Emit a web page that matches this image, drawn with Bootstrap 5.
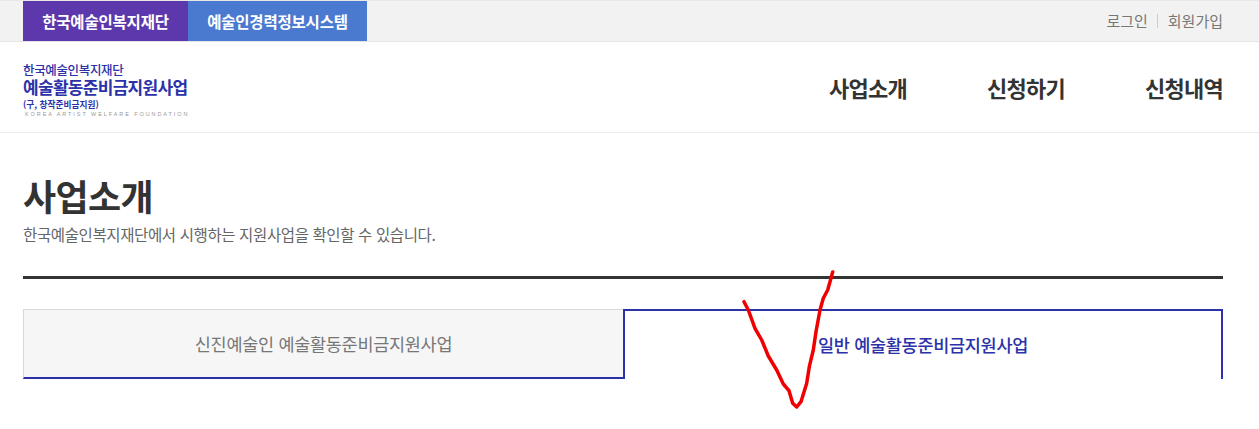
<!DOCTYPE html>
<html lang="ko">
<head>
  <meta charset="UTF-8">
  <title>사업소개</title>
  <link href="https://cdn.jsdelivr.net/npm/bootstrap@5.3.2/dist/css/bootstrap.min.css" rel="stylesheet">
  <style>
    body {
      font-family: "Noto Sans CJK KR", "Liberation Sans", sans-serif;
      color: #333;
      background: #fff;
      overflow: hidden;
      position: relative;
      height: 429px;
    }
    .wrap-x { padding: 0 36px 0 23px; }
    .top-strip {
      height: 42px;
      background: #f2f2f2;
      border-top: 1px solid #e8e8e8;
      border-bottom: 1px solid #e5e5e5;
    }
    .site-tab {
      height: 40px;
      line-height: 40px;
      color: #fff;
      font-size: 15.5px;
      font-weight: 700;
      text-align: center;
      text-decoration: none;
      letter-spacing: -0.2px;
    }
    .tab-foundation { width: 165px; background: #5c38ac; }
    .tab-career { width: 179px; background: #4a7ad0; }
    .util-link { color: #777; font-size: 15px; text-decoration: none; }
    .util-sep { width: 1px; height: 14px; background: #ccc; margin: 0 10px 0 9px; }
    .main-head { height: 91px; border-bottom: 1px solid #ebebeb; }
    .logo-box { color: #2b31a8; line-height: 1; width: 166px; padding-top: 8px; }
    .logo-top { font-size: 12.5px; font-weight: 500; letter-spacing: -0.35px; }
    .logo-main { font-size: 17px; font-weight: 700; letter-spacing: -0.7px; margin-top: 1px; }
    .logo-old { font-size: 8.7px; font-weight: 700; margin-top: 6px; }
    .logo-eng { font-family: "Liberation Sans", sans-serif; font-size: 5.5px; color: #999; letter-spacing: 1.92px; margin: 3px 0 0 2px; white-space: nowrap; }
    .gnb-link { color: #333; font-size: 22px; font-weight: 700; text-decoration: none; letter-spacing: -0.75px; margin-left: 80px; }
    .page-title { font-size: 36px; font-weight: 700; line-height: 1; margin: 44px 0 0; letter-spacing: -0.6px; color: #333; }
    .page-sub { font-size: 15.5px; color: #666; line-height: 20px; margin: 11px 0 0; letter-spacing: -0.38px; }
    .title-rule { height: 3px; background: #333; margin-top: 32px; }
    .biz-tabs { margin-top: 30px; height: 70px; }
    .biz-tab {
      width: 50%;
      font-size: 17.5px;
      text-align: center;
      text-decoration: none;
      letter-spacing: -0.3px;
      display: flex;
      align-items: center;
      justify-content: center;
    }
    .biz-off {
      background: #f6f6f6;
      color: #777;
      border: 1px solid #d9d9d9;
      border-bottom: 2px solid #2b31a8;
      border-right: 0;
      padding-top: 1px;
    }
    .biz-on {
      color: #2b31a8;
      font-weight: 500;
      border: 2px solid #2b31a8;
      border-bottom: 0;
    }
    .red-check { position: absolute; left: 0; top: 0; pointer-events: none; }
  </style>
</head>
<body>
  <div class="top-strip wrap-x d-flex justify-content-between">
    <div class="d-flex">
      <a class="site-tab tab-foundation" href="#">한국예술인복지재단</a>
      <a class="site-tab tab-career" href="#">예술인경력정보시스템</a>
    </div>
    <div class="d-flex align-items-center">
      <a class="util-link" href="#">로그인</a>
      <span class="util-sep"></span>
      <a class="util-link" href="#">회원가입</a>
    </div>
  </div>

  <div class="main-head wrap-x d-flex justify-content-between align-items-center">
    <div class="logo-box">
      <div class="logo-top">한국예술인복지재단</div>
      <div class="logo-main">예술활동준비금지원사업</div>
      <div class="logo-old">(구, 창작준비금지원)</div>
      <div class="logo-eng">KOREA ARTIST WELFARE FOUNDATION</div>
    </div>
    <nav class="d-flex">
      <a class="gnb-link" href="#">사업소개</a>
      <a class="gnb-link" href="#">신청하기</a>
      <a class="gnb-link" href="#">신청내역</a>
    </nav>
  </div>

  <div class="wrap-x">
    <h1 class="page-title">사업소개</h1>
    <p class="page-sub">한국예술인복지재단에서 시행하는 지원사업을 확인할 수 있습니다.</p>
    <div class="title-rule"></div>
    <div class="biz-tabs d-flex">
      <a class="biz-tab biz-off" href="#">신진예술인 예술활동준비금지원사업</a>
      <a class="biz-tab biz-on" href="#">일반 예술활동준비금지원사업</a>
    </div>
  </div>

  <svg class="red-check" width="1259" height="429" viewBox="0 0 1259 429" fill="none">
    <path d="M744 301.7 748.3 310 755 328.3 761.7 340 768.3 356 776.7 370 783.3 384 789 390.7 792.7 403.3 796.7 407 801 401.7 806.7 383.3 809.3 366.7 813.3 350 816 331.7 820 310 823.3 298.3 827.7 290 832.7 272" stroke="#f00000" stroke-width="3.5" stroke-linecap="round" stroke-linejoin="round"/>
  </svg>

  <script src="https://cdn.jsdelivr.net/npm/bootstrap@5.3.2/dist/js/bootstrap.bundle.min.js"></script>
</body>
</html>
